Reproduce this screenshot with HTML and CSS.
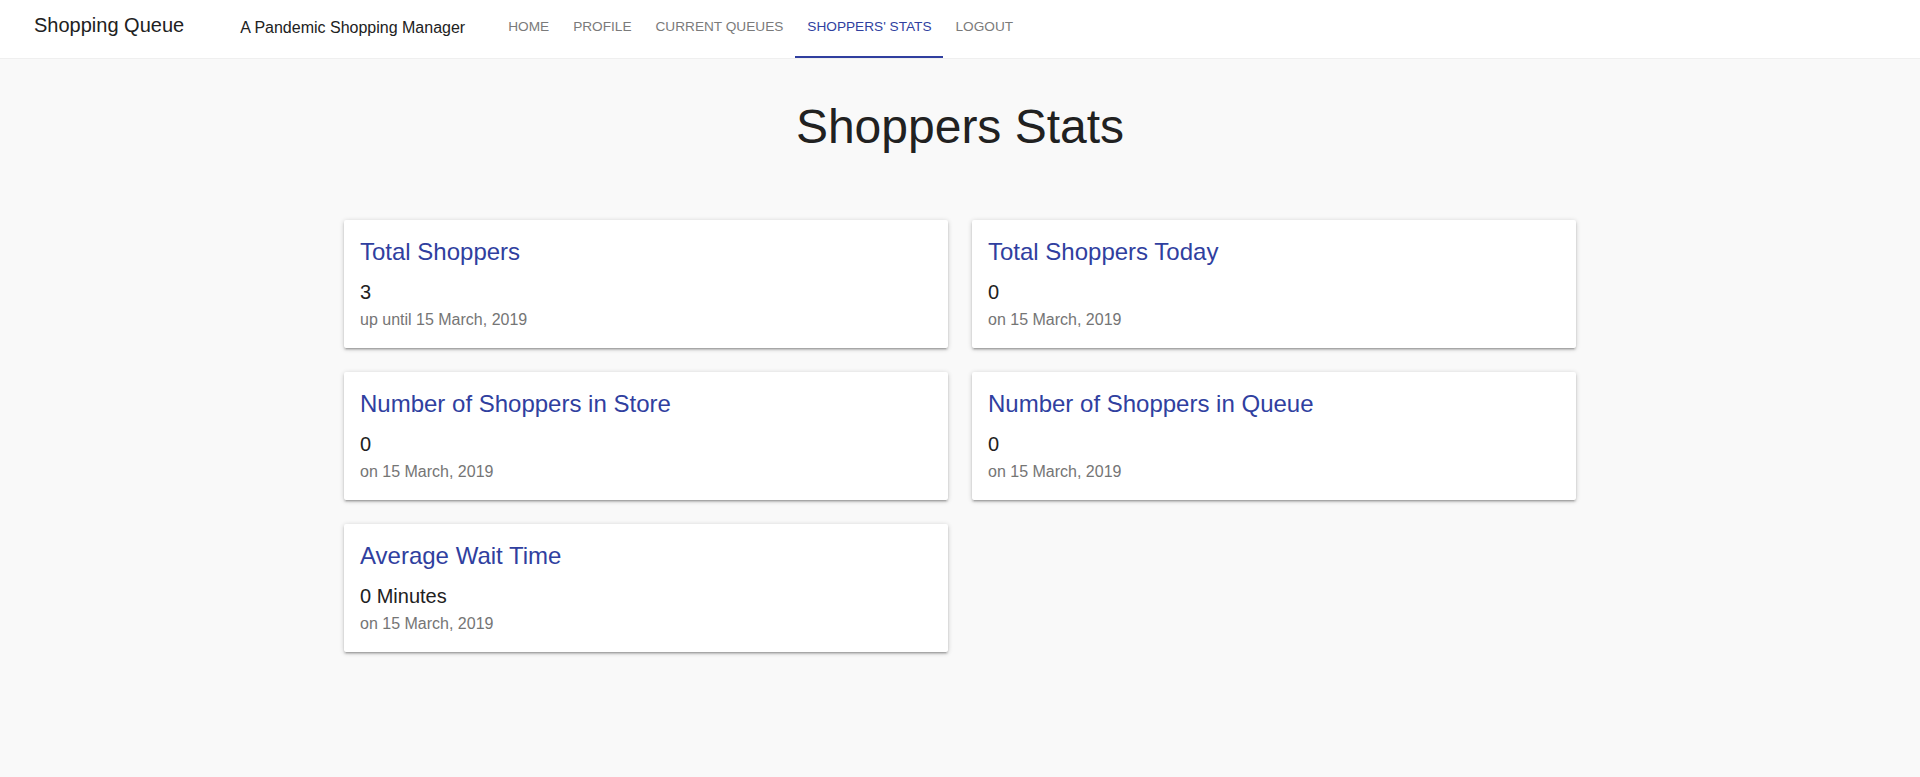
FILE: index.html
```html
<!DOCTYPE html>
<html lang="en">
<head>
<meta charset="utf-8">
<title>Shoppers Stats</title>
<link rel="stylesheet" href="styles.css">
</head>
<body>
<header class="topbar">
  <div class="brand">Shopping Queue</div>
  <div class="tagline">A Pandemic Shopping Manager</div>
  <nav class="tabs">
    <a class="tab">HOME</a>
    <a class="tab">PROFILE</a>
    <a class="tab">CURRENT QUEUES</a>
    <a class="tab active">SHOPPERS' STATS</a>
    <a class="tab">LOGOUT</a>
  </nav>
</header>
<main class="page">
  <h1 class="page-title">Shoppers Stats</h1>
  <section class="grid">
    <div class="card">
      <div class="card-title">Total Shoppers</div>
      <div class="card-value">3</div>
      <div class="card-sub">up until 15 March, 2019</div>
    </div>
    <div class="card">
      <div class="card-title">Total Shoppers Today</div>
      <div class="card-value">0</div>
      <div class="card-sub">on 15 March, 2019</div>
    </div>
    <div class="card">
      <div class="card-title">Number of Shoppers in Store</div>
      <div class="card-value">0</div>
      <div class="card-sub">on 15 March, 2019</div>
    </div>
    <div class="card">
      <div class="card-title">Number of Shoppers in Queue</div>
      <div class="card-value">0</div>
      <div class="card-sub">on 15 March, 2019</div>
    </div>
    <div class="card">
      <div class="card-title">Average Wait Time</div>
      <div class="card-value">0 Minutes</div>
      <div class="card-sub">on 15 March, 2019</div>
    </div>
  </section>
</main>
</body>
</html>
```
FILE: styles.css
```css
* { box-sizing: border-box; }
html, body {
  margin: 0;
  padding: 0;
}
body {
  background: #f9f9f9;
  font-family: "Liberation Sans", Arial, sans-serif;
  color: #212121;
  min-height: 777px;
}
.topbar {
  display: flex;
  align-items: flex-start;
  height: 59px;
  background: #ffffff;
  border-bottom: 1px solid #efefef;
  padding-left: 34px;
}
.brand {
  font-size: 20px;
  line-height: 24px;
  padding-top: 13px;
  color: #212121;
}
.tagline {
  font-size: 16px;
  line-height: 24px;
  padding-top: 16px;
  margin-left: 56px;
  color: #212121;
}
.tabs {
  display: flex;
  margin-left: 31px;
  height: 58px;
}
.tab {
  display: block;
  height: 58px;
  padding: 17px 12px 0;
  font-size: 13.65px;
  line-height: 20px;
  color: #7a7a7a;
  text-decoration: none;
  border-bottom: 2px solid transparent;
}
.tab.active {
  color: #303f9f;
  border-bottom-color: #303f9f;
}
.page {
  display: flex;
  flex-direction: column;
  align-items: center;
}
.page-title {
  margin: 40px 0 65px;
  font-size: 48px;
  line-height: 56px;
  font-weight: 400;
  color: #212121;
}
.grid {
  width: 1232px;
  display: grid;
  grid-template-columns: 1fr 1fr;
  column-gap: 24px;
  row-gap: 24px;
}
.card {
  background: #ffffff;
  border-radius: 2px;
  padding: 16px 16px 16px;
  height: 128px;
  box-shadow: 0 2px 2px 0 rgba(0,0,0,0.14), 0 3px 1px -2px rgba(0,0,0,0.12), 0 1px 5px 0 rgba(0,0,0,0.2);
}
.card-title {
  font-size: 24px;
  line-height: 32px;
  color: #303f9f;
  margin-bottom: 8px;
}
.card-value {
  font-size: 20px;
  line-height: 32px;
  color: #212121;
}
.card-sub {
  font-size: 16px;
  line-height: 24px;
  color: #757575;
}
```
